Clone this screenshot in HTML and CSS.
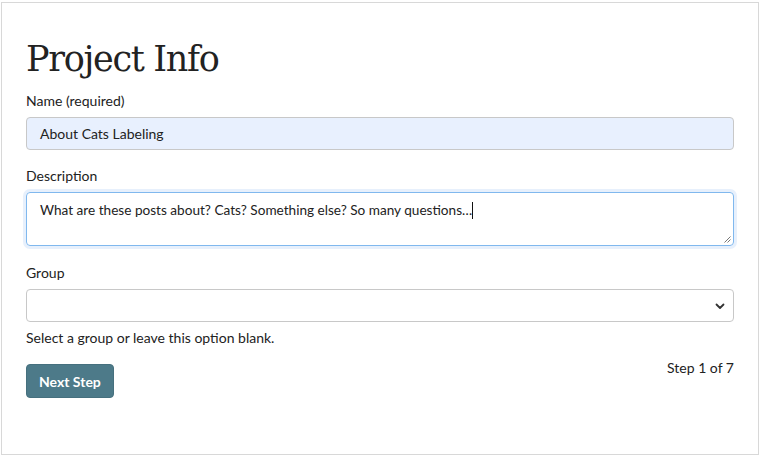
FILE: index.html
```html
<!DOCTYPE html>
<html lang="en">
<head>
<meta charset="utf-8">
<title>Project Info</title>
<link rel="stylesheet" href="styles.css">
</head>
<body>
<div class="frame">
  <h1 class="title">Project Info</h1>
  <form class="form">
    <div class="field">
      <label class="label" for="name">Name (required)</label>
      <div class="input input-filled" id="name">About Cats Labeling</div>
    </div>
    <div class="field field-desc">
      <label class="label" for="desc">Description</label>
      <div class="textarea" id="desc"><span>What are these posts about? Cats? Something else? So many questions…</span><span class="caret"></span>
        <svg class="grip" width="7" height="7" viewBox="0 0 7 7"><path d="M6.5 0.5 L0.5 6.5 M6.5 3.5 L3.5 6.5" stroke="#777" stroke-width="1" fill="none"/></svg>
      </div>
    </div>
    <div class="field field-last">
      <label class="label" for="group">Group</label>
      <div class="select" id="group">
        <svg class="chev" width="10" height="7" viewBox="0 0 10 7"><path d="M1.5 1.5 L5 5 L8.5 1.5" stroke="#333" stroke-width="1.8" fill="none" stroke-linecap="round" stroke-linejoin="round"/></svg>
      </div>
      <p class="help">Select a group or leave this option blank.</p>
    </div>
    <div class="actions">
      <button type="button" class="btn">Next Step</button>
      <span class="step">Step 1 of 7</span>
    </div>
  </form>
</div>
</body>
</html>
```
FILE: styles.css
```css
html, body {
  margin: 0;
  padding: 0;
  background: #fff;
}
body {
  font-family: Lato, "Open Sans", sans-serif;
  color: #222;
  font-size: 14px;
}
.frame {
  margin: 2px 2px 4px 1px;
  width: 758px;
  height: 453px;
  box-sizing: border-box;
  border: 1px solid #d8d8d8;
  padding: 0 24px 0 24px;
}
.title {
  font-family: "DejaVu Serif", serif;
  font-weight: normal;
  font-size: 35px;
  line-height: 43px;
  margin: 35px 0 10px 0;
  color: #222;
  letter-spacing: -1.3px;
}
.form {
  display: flex;
  flex-direction: column;
}
.field {
  display: flex;
  flex-direction: column;
  margin-bottom: 16px;
}
.field-desc {
  margin-bottom: 17px;
}
.field-last {
  margin-bottom: 10px;
}
.label {
  font-size: 14px;
  line-height: 20px;
  margin-bottom: 6px;
  color: #222;
}
.input, .select {
  height: 33px;
  box-sizing: border-box;
  border: 1px solid #c8c8c8;
  border-radius: 4px;
  padding: 0 13px;
  font-size: 14px;
  line-height: 31px;
  background: #fff;
  color: #222;
}
.input-filled {
  background: #e8f0fe;
}
.textarea {
  position: relative;
  height: 54px;
  box-sizing: border-box;
  border: 1px solid #80b8ee;
  border-radius: 4px;
  box-shadow: 0 0 0 3px rgba(120, 170, 240, 0.18);
  padding: 8px 13px;
  font-size: 13.6px;
  line-height: 18px;
  color: #222;
}
.caret {
  display: inline-block;
  width: 1px;
  height: 17px;
  background: #111;
  vertical-align: -4px;
}
.grip {
  position: absolute;
  right: 2px;
  bottom: 2px;
}
.select {
  position: relative;
}
.chev {
  position: absolute;
  right: 8px;
  top: 13px;
}
.help {
  margin: 6px 0 0 0;
  font-size: 14px;
  line-height: 20px;
}
.actions {
  display: flex;
  justify-content: space-between;
  align-items: flex-start;
}
.btn {
  font-family: Lato, sans-serif;
  font-weight: bold;
  font-size: 14px;
  color: #fff;
  background: #4d7a89;
  border: 1px solid #46707e;
  border-radius: 4px;
  height: 34px;
  padding: 0 12px;
  margin-top: 6px;
}
.step {
  font-size: 14px;
  line-height: 20px;
}
```
